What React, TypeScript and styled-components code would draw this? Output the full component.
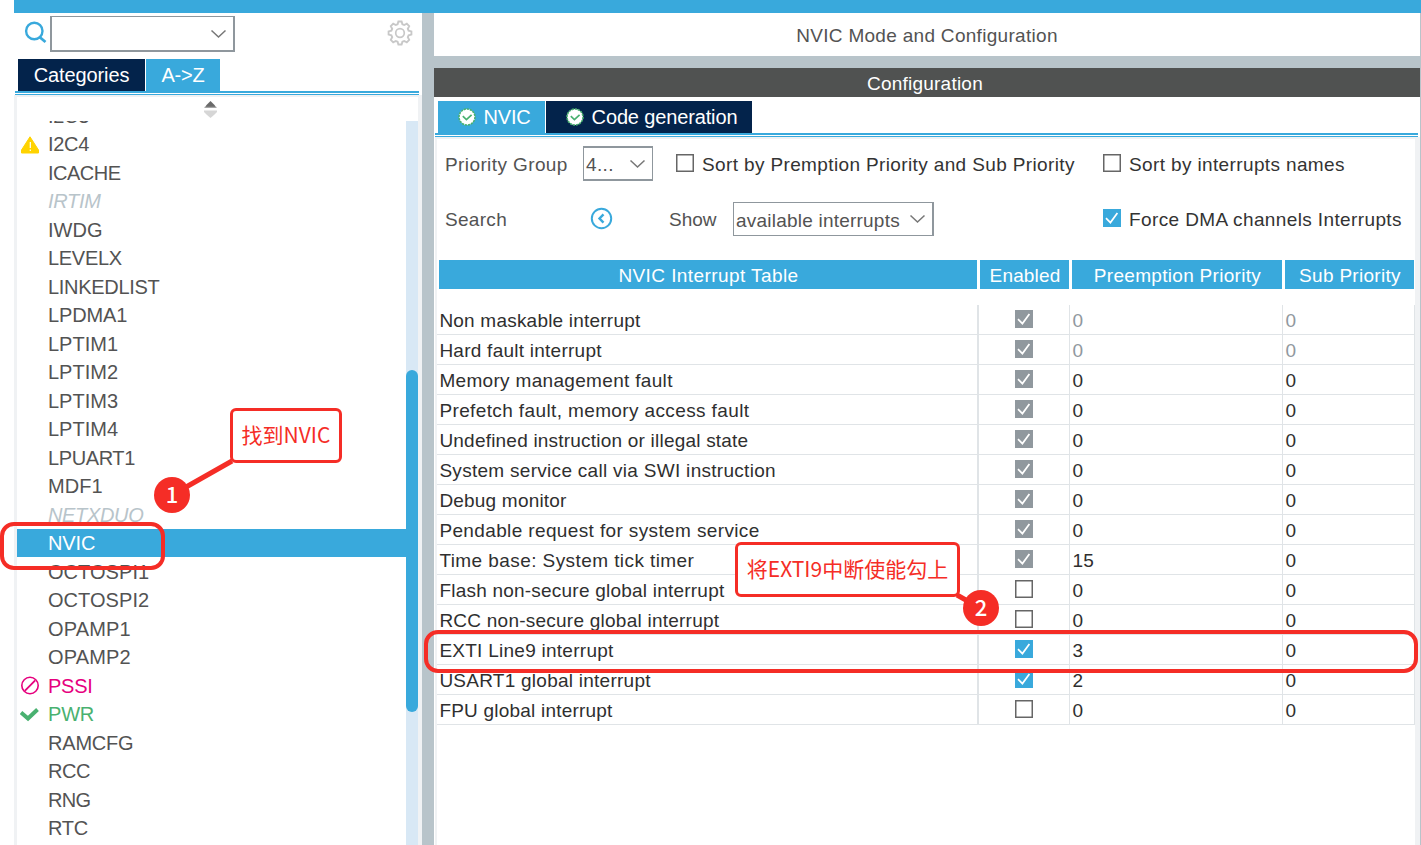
import React from 'react';
import styled, { createGlobalStyle } from 'styled-components';

const blue = '#39a9dc';
const navy = '#03234b';
const slate = '#b8c4ca';
const pale = '#f0f2f4';
const line = '#e0e4e7';
const red = '#f52d26';

const Global = createGlobalStyle`
  * { box-sizing: border-box; }
  body { margin: 0; background: #fff; font-family: "Liberation Sans", Arial, sans-serif; font-size: 20px; color: #535353; overflow: hidden; }
`;

const Page = styled.div`
  position: relative;
  width: 1421px;
  height: 845px;
  padding-left: 14px;
  display: flex;
  flex-direction: column;
  overflow: hidden;
`;
const TopBar = styled.div`height: 13px; flex: none; background: ${blue};`;
const Columns = styled.div`flex: 1; min-height: 0; display: flex;`;

const Text = styled.span<{ $ls?: number; $color?: string }>`
  white-space: pre;
  line-height: 19px;
  letter-spacing: ${p => p.$ls ?? 0.34}px;
  ${p => p.$color && `color: ${p.$color};`}
`;

const Sidebar = styled.div`width: 408px; flex: none; display: flex; flex-direction: column;`;
const Gutter = styled.div`width: 12px; flex: none; background: ${slate};`;
const SearchRow = styled.div`
  height: 46px;
  flex: none;
  display: flex;
  padding: 3px 9px 0 10px;
`;
const SearchIcon = styled.svg`width: 23px; height: 23px; margin: 5px 3px 0 0;`;
const GearIcon = styled.svg`width: 26px; height: 26px; margin: 4px 0 0 auto;`;
const Combo = styled.div<{ $w: number; $h: number; $b: string; $up?: number }>`
  width: ${p => p.$w}px;
  height: ${p => p.$h}px;
  margin-top: -${p => p.$up ?? 0}px;
  border: solid #8f979d;
  border-width: ${p => p.$b};
  display: flex;
  align-items: center;
  justify-content: space-between;
  padding: 0 6px 0 2px;
  ${Text} { padding-top: 2px; }
`;
const Chevron = styled.svg`width: 17px; height: 10px; flex: none; margin-left: auto;`;
const Tabs = styled.div`
  display: flex;
  gap: 1px;
  height: 32px;
  flex: none;
  padding-left: 4px;
  font-size: 20px;
`;
const Tab = styled.div<{ $w: number; $active?: boolean; $pl?: number }>`
  width: ${p => p.$w}px;
  padding-left: ${p => p.$pl ?? 0}px;
  background: ${p => (p.$active ? blue : navy)};
  color: #fff;
  display: flex;
  align-items: center;
  justify-content: center;
  gap: 8px;
`;
const DoubleRule = styled.div<{ $r: number }>`
  height: 4px;
  flex: none;
  margin: 0 ${p => p.$r}px 0 1px;
  border-top: 2px solid ${blue};
  border-bottom: 1px solid ${blue};
`;
const ListPanel = styled.div`
  flex: 1;
  min-height: 0;
  display: flex;
  flex-direction: column;
  border: solid ${pale};
  border-width: 2px 4px 0 3px;
`;
const SortRow = styled.div`height: 24px; flex: none; padding: 3px 0 0 187px;`;
const ListBody = styled.div`flex: 1; min-height: 0; display: flex; overflow: hidden;`;
const List = styled.div`flex: 1; margin-top: -19.5px;`;
const Item = styled.div<{ $kind?: string }>`
  height: 28px;
  margin-bottom: 0.5px;
  padding-top: 1.1px;
  display: flex;
  align-items: center;
  color: ${p => ({ off: '#b8c4ca', sel: '#fff', err: '#e6007e', ok: '#49b170' } as Record<string, string>)[p.$kind ?? ''] ?? '#535353'};
  background: ${p => (p.$kind === 'sel' ? blue : 'transparent')};
  font-style: ${p => (p.$kind === 'off' ? 'italic' : 'normal')};
`;
const IconSlot = styled.span`width: 31px; height: 20px; padding-left: 3px; flex: none;`;
const Track = styled.div`width: 12px; background: #d8e8f5; padding-top: 249px;`;
const Thumb = styled.div`height: 342px; border-radius: 6px; background: ${blue};`;

const Main = styled.div`
  flex: 1;
  display: flex;
  flex-direction: column;
  border-right: 1px solid ${slate};
  font-size: 19px;
`;
const Title = styled.div`
  height: 43px;
  flex: none;
  display: flex;
  align-items: center;
  justify-content: center;
  padding: 2px 0 0 0;
`;
const Band = styled.div`height: 12px; flex: none; background: ${slate};`;
const ConfigBar = styled.div`
  height: 29px;
  flex: none;
  margin-bottom: 4px;
  background: #505251;
  color: #fff;
  display: flex;
  align-items: center;
  justify-content: center;
  padding: 2px 4px 0 0;
`;
const Content = styled.div`
  flex: 1;
  margin-left: 1px;
  border: solid ${pale};
  border-width: 2px 5px 0 2px;
`;
const Options = styled.div`
  height: 121px;
  display: grid;
  grid-template-columns: 138px 82px 68px 366px 1fr;
  grid-template-rows: 51px 59px;
  padding-left: 8px;
  align-items: center;
`;
const Cell = styled.div<{ $span?: number; $pl?: number }>`
  grid-column: span ${p => p.$span ?? 1};
  padding-left: ${p => p.$pl ?? 0}px;
  display: flex;
  align-items: center;
  gap: 8px;
  color: #333;
`;
const Box = styled.svg<{ $up?: boolean }>`
  width: 18px;
  height: 18px;
  flex: none;
  display: block;
  margin-top: ${p => (p.$up ? -3 : 0)}px;
`;
const Collapse = styled.svg`width: 23px; height: 23px; margin-top: -2px;`;

const Grid = styled.div`
  display: grid;
  grid-template-columns: 541px 92px 213px 132px;
`;
const Head = styled.div`
  height: 29px;
  margin: 0 1px 16px 2px;
  background: ${blue};
  color: #fff;
  display: flex;
  align-items: center;
  justify-content: center;
  padding: 2px 0 0 1px;
`;
const Td = styled.div<{ $b?: number; $color?: string; $center?: boolean }>`
  height: 30px;
  border: solid ${line};
  border-width: 0 1px 1px ${p => p.$b ?? 0}px;
  color: ${p => p.$color ?? '#2f2f2f'};
  display: flex;
  align-items: center;
  justify-content: ${p => (p.$center ? 'center' : 'flex-start')};
  padding: ${p => (p.$center ? '0 0 1px 0' : '2px 0 0 2.4px')};
`;

const Frame = styled.div<{ $x: number; $y: number; $w: number; $h: number; $b?: number; $r?: number }>`
  position: absolute;
  left: ${p => p.$x}px;
  top: ${p => p.$y}px;
  width: ${p => p.$w}px;
  height: ${p => p.$h}px;
  border: ${p => p.$b ?? 4}px solid ${red};
  border-radius: ${p => p.$r ?? 14}px;
`;
const Note = styled(Frame)`
  background: #fff;
  color: ${red};
  display: flex;
  align-items: center;
  justify-content: center;
  white-space: nowrap;
  padding-bottom: 2px;
  font: 21px/1 "Noto Sans CJK SC", sans-serif;
`;
const Badge = styled.div<{ $x: number; $y: number }>`
  position: absolute;
  left: ${p => p.$x}px;
  top: ${p => p.$y}px;
  width: 36px;
  height: 36px;
  padding-bottom: 4px;
  border-radius: 50%;
  background: ${red};
  color: #fff;
  display: flex;
  align-items: center;
  justify-content: center;
  font: 500 22px/1 "Noto Sans CJK SC", sans-serif;
`;
const Leader = styled.svg`position: absolute; left: 0; top: 0; pointer-events: none;`;

const Check = ({ state, up }: { state: 'none' | 'on' | 'locked'; up?: boolean }) => (
  <Box viewBox="0 0 18 18" $up={up}>
    {state === 'none' ? (
      <rect x="0.75" y="0.75" width="16.5" height="16.5" fill="#fff" stroke="#666" strokeWidth="1.5" />
    ) : (
      <>
        <rect width="18" height="18" fill={state === 'on' ? blue : '#90989e'} />
        <path d="M3 9.2 L7.4 13.6 L14.4 4" fill="none" stroke="#fff" strokeWidth="1.7" />
      </>
    )}
  </Box>
);
const Down = () => (
  <Chevron viewBox="0 0 17 10">
    <path d="M1.5 1.5 L8.5 8 L15.5 1.5" fill="none" stroke="#777" strokeWidth="1.5" />
  </Chevron>
);
const TabCheck = () => (
  <svg width="18" height="18" viewBox="0 0 18 18">
    <circle cx="9" cy="9" r="8" fill="#fff" stroke="#49b170" strokeWidth="1.6" strokeDasharray="2.2 0.9" />
    <path d="M4.8 8.2 L8.4 11.6 L13.6 6.8" fill="none" stroke="#49b170" strokeWidth="1.7" />
  </svg>
);
const Warn = () => (
  <svg width="20" height="20" viewBox="0 0 20 20">
    <path d="M10 1.8 L18.5 15 V18 H1.5 V15 Z" fill="#ffd300" stroke="#ffd300" strokeLinejoin="round" />
    <path d="M10.3 7 V13 M10.3 14.5 V16" stroke="#fff" strokeWidth="1.2" />
  </svg>
);
const Ban = () => (
  <svg width="20" height="20" viewBox="0 0 20 20">
    <circle cx="10" cy="9.5" r="8.2" fill="none" stroke="#e6007e" strokeWidth="1.6" />
    <path d="M4.8 14.8 L15.2 4.4" stroke="#e6007e" strokeWidth="1.8" />
  </svg>
);
const Tick = () => (
  <svg width="20" height="20" viewBox="0 0 20 20">
    <path d="M1 7.5 L8 13.5 L17.5 4.5" fill="none" stroke="#49b170" strokeWidth="4" />
  </svg>
);

const items: [string, string?, number?][] = [
  ['I2C3'], ['I2C4', 'warn'], ['ICACHE', '', -0.5], ['IRTIM', 'off'], ['IWDG', '', 0], ['LEVELX'],
  ['LINKEDLIST', '', -0.3], ['LPDMA1', '', -0.15], ['LPTIM1', '', 0], ['LPTIM2', '', 0], ['LPTIM3', '', 0],
  ['LPTIM4', '', 0], ['LPUART1', '', -0.4], ['MDF1', '', 0.1], ['NETXDUO', 'off', -0.35], ['NVIC', 'sel', -0.1],
  ['OCTOSPI1', '', 0.05], ['OCTOSPI2', '', 0.05], ['OPAMP1', '', 0.15], ['OPAMP2', '', 0.15], ['PSSI', 'err', -0.25],
  ['PWR', 'ok', -0.2], ['RAMCFG', '', -0.2], ['RCC', '', -0.4], ['RNG', '', -0.7], ['RTC', '', -0.3],
];

type Row = [string, 'none' | 'on' | 'locked', string, string, number];
const rows: Row[] = [
  ['Non maskable interrupt', 'locked', '0', '0', 0.21],
  ['Hard fault interrupt', 'locked', '0', '0', 0.25],
  ['Memory management fault', 'locked', '0', '0', 0.32],
  ['Prefetch fault, memory access fault', 'locked', '0', '0', 0.38],
  ['Undefined instruction or illegal state', 'locked', '0', '0', 0.21],
  ['System service call via SWI instruction', 'locked', '0', '0', 0.29],
  ['Debug monitor', 'locked', '0', '0', 0.2],
  ['Pendable request for system service', 'locked', '0', '0', 0.37],
  ['Time base: System tick timer', 'locked', '15', '0', 0.42],
  ['Flash non-secure global interrupt', 'none', '0', '0', 0.22],
  ['RCC non-secure global interrupt', 'none', '0', '0', 0.24],
  ['EXTI Line9 interrupt', 'on', '3', '0', 0.26],
  ['USART1 global interrupt', 'on', '2', '0', 0.25],
  ['FPU global interrupt', 'none', '0', '0', 0.21],
];

export default function App() {
  return (
    <Page>
      <Global />
      <TopBar />
      <Columns>
        <Sidebar>
          <SearchRow>
            <SearchIcon viewBox="0 0 23 23">
              <circle cx="10.3" cy="10" r="8.2" fill="none" stroke={blue} strokeWidth="2.4" />
              <path d="M15.5 16 L21.5 21" stroke={blue} strokeWidth="2.8" />
            </SearchIcon>
            <Combo $w={185} $h={36} $b="1px 2px 2px 2px"><Down /></Combo>
            <GearIcon viewBox="0 0 26 26" fill="none" stroke="#c8c8c8">
              <path
                d="M11.4 1.5 H14.6 L15.4 4.3 L17.2 5 L19.8 3.6 L22.2 6.1 L20.8 8.7 L21.6 10.6 L24.4 11.4 V14.6 L21.6 15.4 L20.8 17.3 L22.2 19.9 L19.8 22.4 L17.2 21 L15.4 21.7 L14.6 24.5 H11.4 L10.6 21.7 L8.8 21 L6.2 22.4 L3.8 19.9 L5.2 17.3 L4.4 15.4 L1.6 14.6 V11.4 L4.4 10.6 L5.2 8.7 L3.8 6.1 L6.2 3.6 L8.8 5 L10.6 4.3 Z"
                strokeWidth="1.9"
              />
              <circle cx="13" cy="13" r="4.3" strokeWidth="1.7" />
            </GearIcon>
          </SearchRow>
          <Tabs>
            <Tab $w={127}><Text $ls={-0.1}>Categories</Text></Tab>
            <Tab $w={74} $active><Text $ls={-0.2}>{'A->Z'}</Text></Tab>
          </Tabs>
          <DoubleRule $r={3} />
          <ListPanel>
            <SortRow>
              <svg width="13" height="17" viewBox="0 0 13 17">
                <path d="M6.5 0 L10.5 4 L12.5 7 H0.5 L2.5 4 Z" fill="#6a6a6a" />
                <path d="M0.5 6.3 H12.5" stroke="#b5b5b5" />
                <path d="M0 9.5 H13 V11 L10.5 13.5 L6.5 17 L2.5 13.5 L0 11 Z" fill="#d6d6d6" />
              </svg>
            </SortRow>
            <ListBody>
              <List>
                {items.map(([name, kind, ls]) => (
                  <Item key={name} $kind={kind}>
                    <IconSlot>
                      {kind === 'warn' && <Warn />}
                      {kind === 'err' && <Ban />}
                      {kind === 'ok' && <Tick />}
                    </IconSlot>
                    <Text $ls={ls ?? -0.3}>{name}</Text>
                  </Item>
                ))}
              </List>
              <Track><Thumb /></Track>
            </ListBody>
          </ListPanel>
        </Sidebar>
        <Gutter />
        <Main>
          <Title><Text $ls={0.3}>NVIC Mode and Configuration</Text></Title>
          <Band />
          <ConfigBar><Text $ls={0.22}>Configuration</Text></ConfigBar>
          <Tabs>
            <Tab $w={107} $active $pl={5}><TabCheck /><Text $ls={-0.2}>NVIC</Text></Tab>
            <Tab $w={206} $pl={5}><TabCheck /><Text $ls={-0.14}>Code generation</Text></Tab>
          </Tabs>
          <DoubleRule $r={2} />
          <Content>
            <Options>
              <Text $ls={0.4}>Priority Group</Text>
              <Combo $w={70} $h={35} $b="2px 1px 2px 1px" $up={2}><Text>4...</Text><Down /></Combo>
              <Cell $span={2} $pl={11}><Check up state="none" /><Text $ls={0.37}>Sort by Premption Priority and Sub Priority</Text></Cell>
              <Cell $pl={4}><Check up state="none" /><Text $ls={0.37}>Sort by interrupts names</Text></Cell>
              <Text $ls={0.3}>Search</Text>
              <Cell $pl={7}>
                <Collapse viewBox="0 0 23 23" fill="none" stroke={blue}>
                  <circle cx="11.5" cy="11.5" r="9.7" strokeWidth="2" />
                  <path d="M13.5 7.3 L9.5 11.5 L13.5 15.7" strokeWidth="2.4" />
                </Collapse>
              </Cell>
              <Cell $pl={4}><Text $color="#535353" $ls={0}>Show</Text></Cell>
              <Combo $w={201} $h={34} $b="1px 2px 1px 1px" $up={1}><Text $ls={0.22}>available interrupts</Text><Down /></Combo>
              <Cell $pl={4}><Check up state="on" /><Text $ls={0.38}>Force DMA channels Interrupts</Text></Cell>
            </Options>
            <Grid>
              <Head><Text $ls={0.42}>NVIC Interrupt Table</Text></Head>
              <Head><Text $ls={0.15}>Enabled</Text></Head>
              <Head><Text $ls={0.3}>Preemption Priority</Text></Head>
              <Head><Text $ls={0.3}>Sub Priority</Text></Head>
              {rows.map(([name, state, pre, sub, ls], i) => (
                <React.Fragment key={name}>
                  <Td><Text $ls={ls}>{name}</Text></Td>
                  <Td $b={1} $center><Check state={state} /></Td>
                  <Td $color={i < 2 ? '#90989e' : undefined}><Text>{pre}</Text></Td>
                  <Td $color={i < 2 ? '#90989e' : undefined}><Text>{sub}</Text></Td>
                </React.Fragment>
              ))}
            </Grid>
          </Content>
        </Main>
      </Columns>
      <Frame $x={0} $y={522} $w={165} $h={48} />
      <Frame $x={424} $y={630} $w={994} $h={43} />
      <Leader width="1421" height="845" stroke={red} strokeWidth="5">
        <path d="M172 495 L232 461 M957 595 L980 608" />
      </Leader>
      <Note $x={230} $y={408} $w={112} $h={55} $b={3} $r={6}>找到NVIC</Note>
      <Note $x={735} $y={542} $w={225} $h={55} $b={3} $r={6}>将EXTI9中断使能勾上</Note>
      <Badge $x={154} $y={477}>1</Badge>
      <Badge $x={963} $y={590}>2</Badge>
    </Page>
  );
}
